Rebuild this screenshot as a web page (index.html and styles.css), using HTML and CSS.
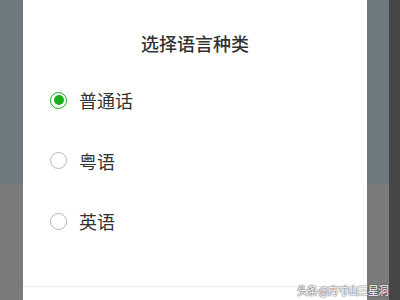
FILE: index.html
```html
<!DOCTYPE html>
<html lang="zh-CN">
<head>
<meta charset="utf-8">
<title>选择语言种类</title>
<link rel="stylesheet" href="styles.css">
</head>
<body>
<div class="screen">
  <div class="backdrop">
    <div class="band-top"></div>
    <div class="band-bottom"></div>
  </div>
  <div class="edge"></div>
</div>
<div class="dialog">
  <div class="title">选择语言种类</div>
  <ul class="options">
    <li class="option"><span class="radio checked"></span><span class="label">普通话</span></li>
    <li class="option"><span class="radio"></span><span class="label">粤语</span></li>
    <li class="option"><span class="radio"></span><span class="label">英语</span></li>
  </ul>
  <div class="divider"></div>
</div>
<div class="watermark">头条 @方寸山三星洞</div>
</body>
</html>
```
FILE: styles.css
```css
html, body {
  margin: 0;
  padding: 0;
  width: 400px;
  height: 300px;
  overflow: hidden;
  font-family: "Noto Sans CJK SC", "Noto Sans", sans-serif;
}
.screen {
  display: flex;
  width: 400px;
  height: 300px;
}
.backdrop {
  flex: 1;
  display: flex;
  flex-direction: column;
}
.band-top {
  height: 184px;
  background: #6e7980;
}
.band-bottom {
  flex: 1;
  background: #7b7b7b;
}
.edge {
  width: 11px;
  background: #464646;
}
.dialog {
  position: absolute;
  left: 23px;
  top: -10px;
  width: 344px;
  height: 310px;
  overflow: hidden;
  background: #ffffff;
  border-radius: 10px 10px 0 0;
  box-sizing: border-box;
  padding-top: 41px;
  display: flex;
  flex-direction: column;
}
.title {
  text-align: center;
  font-size: 18px;
  line-height: 24px;
  font-weight: 500;
  color: #333333;
}
.options {
  list-style: none;
  margin: 15px 0 0 0;
  padding: 0 0 0 27px;
}
.option {
  height: 60.5px;
  display: flex;
  align-items: center;
  gap: 12px;
}
.radio {
  width: 17px;
  height: 17px;
  box-sizing: border-box;
  border: 1.5px solid #b5b5b5;
  border-radius: 50%;
  display: flex;
  align-items: center;
  justify-content: center;
}
.radio.checked {
  border-color: #1aad19;
}
.radio.checked::after {
  content: "";
  width: 10px;
  height: 10px;
  border-radius: 50%;
  background: #1aad19;
}
.label {
  font-size: 18px;
  line-height: 24px;
  color: #333333;
}
.divider {
  margin-top: 34px;
  height: 1px;
  background: #ececec;
}
.watermark {
  position: absolute;
  left: 297px;
  top: 282px;
  font-size: 11px;
  line-height: 16px;
  color: #ffffff;
  letter-spacing: -1px;
  text-shadow: 0 0 1px #333, 0 0 2px #555;
  white-space: nowrap;
}
```
